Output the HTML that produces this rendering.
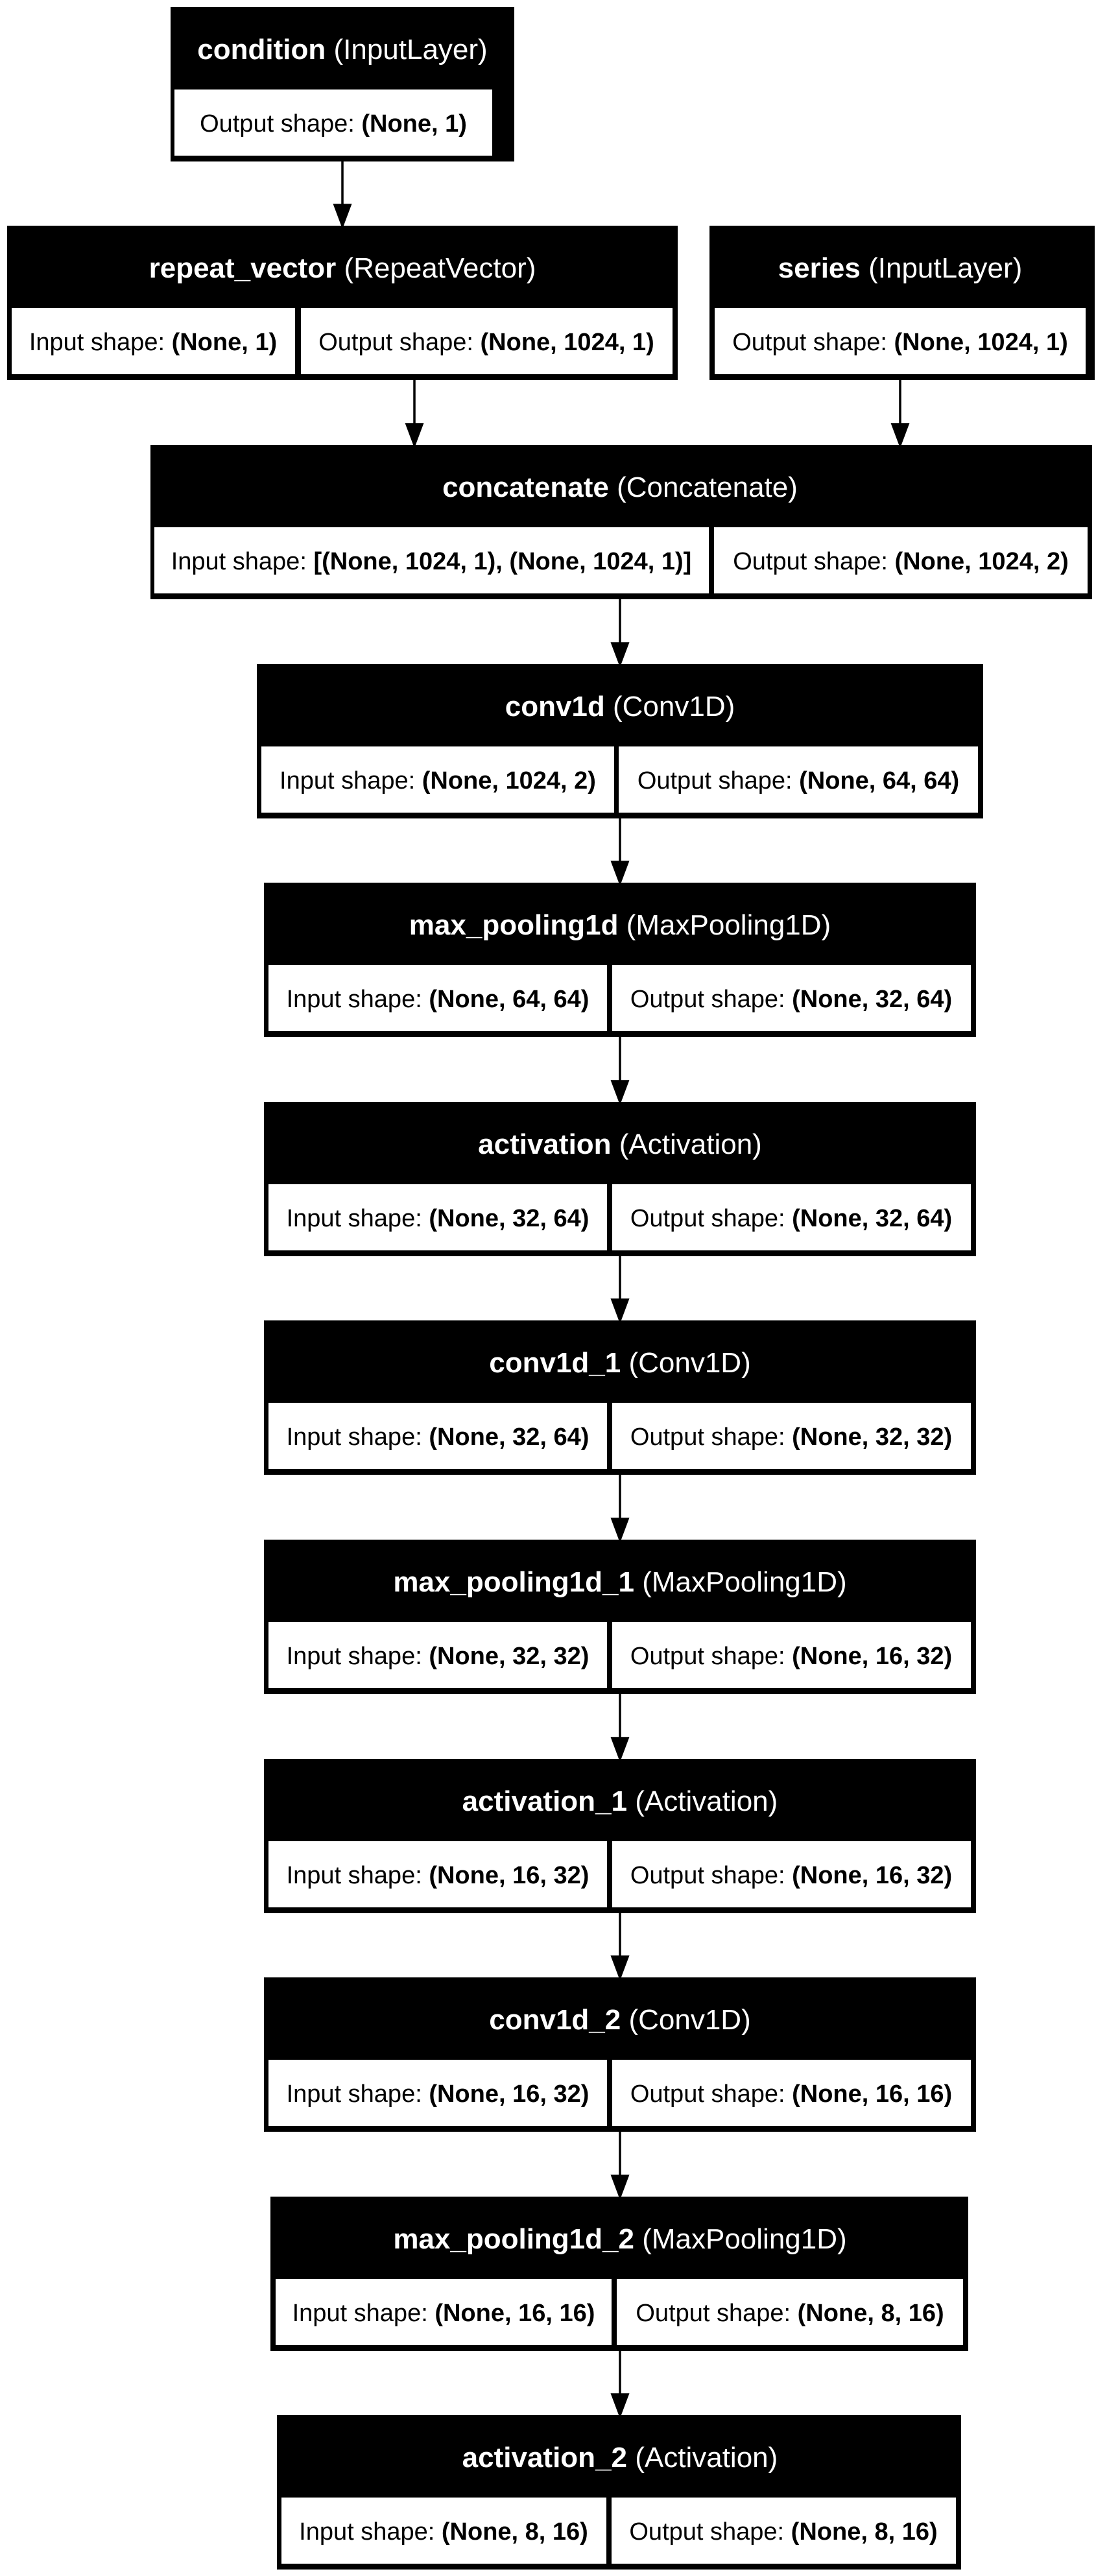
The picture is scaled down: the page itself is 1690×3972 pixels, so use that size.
<!DOCTYPE html>
<html><head><meta charset="utf-8"><style>
html,body{margin:0;padding:0;background:#fff;}
svg{display:block;}
text{font-family:"Liberation Sans",Arial,sans-serif;font-size:38px;text-anchor:middle;}
.t{fill:#fff;font-size:44px;}
.c{fill:#000;}
.b{font-weight:bold;}
</style></head><body>
<svg width="1690" height="3972" viewBox="0 0 1690 3972" xmlns="http://www.w3.org/2000/svg">
<rect width="1690" height="3972" fill="#fff"/>
<g stroke="#000" stroke-width="3.5" fill="#000">
<line x1="528" y1="248" x2="528" y2="318"/><polygon points="516,316 540,316 528,348"/>
<line x1="639" y1="586" x2="639" y2="656"/><polygon points="627,654 651,654 639,686"/>
<line x1="1388" y1="586" x2="1388" y2="656"/><polygon points="1376,654 1400,654 1388,686"/>
<line x1="956" y1="924" x2="956" y2="994"/><polygon points="944,992 968,992 956,1024"/>
<line x1="956" y1="1262" x2="956" y2="1331"/><polygon points="944,1329 968,1329 956,1361"/>
<line x1="956" y1="1599" x2="956" y2="1669"/><polygon points="944,1667 968,1667 956,1699"/>
<line x1="956" y1="1937" x2="956" y2="2006"/><polygon points="944,2004 968,2004 956,2036"/>
<line x1="956" y1="2274" x2="956" y2="2344"/><polygon points="944,2342 968,2342 956,2374"/>
<line x1="956" y1="2612" x2="956" y2="2682"/><polygon points="944,2680 968,2680 956,2712"/>
<line x1="956" y1="2950" x2="956" y2="3019"/><polygon points="944,3017 968,3017 956,3049"/>
<line x1="956" y1="3287" x2="956" y2="3357"/><polygon points="944,3355 968,3355 956,3387"/>
<line x1="956" y1="3625" x2="956" y2="3694"/><polygon points="944,3692 968,3692 956,3724"/>
</g>

<rect x="263" y="11" width="530" height="238" fill="#000"/>
<rect x="269" y="138" width="490" height="102" fill="#fff"/>
<text class="t" x="528" y="91"><tspan class="b">condition</tspan> (InputLayer)</text>
<text class="c" x="514" y="203">Output shape: <tspan class="b">(None, 1)</tspan></text>

<rect x="11" y="348" width="1034" height="238" fill="#000"/>
<rect x="18" y="475" width="437" height="102" fill="#fff"/>
<rect x="464" y="475" width="573" height="102" fill="#fff"/>
<text class="t" x="528" y="428"><tspan class="b">repeat_vector</tspan> (RepeatVector)</text>
<text class="c" x="236" y="540">Input shape: <tspan class="b">(None, 1)</tspan></text>
<text class="c" x="750" y="540">Output shape: <tspan class="b">(None, 1024, 1)</tspan></text>

<rect x="1094" y="348" width="594" height="238" fill="#000"/>
<rect x="1102" y="475" width="572" height="102" fill="#fff"/>
<text class="t" x="1388" y="428"><tspan class="b">series</tspan> (InputLayer)</text>
<text class="c" x="1388" y="540">Output shape: <tspan class="b">(None, 1024, 1)</tspan></text>

<rect x="232" y="686" width="1452" height="238" fill="#000"/>
<rect x="238" y="813" width="855" height="102" fill="#fff"/>
<rect x="1101" y="813" width="576" height="102" fill="#fff"/>
<text class="t" x="956" y="766"><tspan class="b">concatenate</tspan> (Concatenate)</text>
<text class="c" x="665" y="878">Input shape: <tspan class="b">[(None, 1024, 1), (None, 1024, 1)]</tspan></text>
<text class="c" x="1389" y="878">Output shape: <tspan class="b">(None, 1024, 2)</tspan></text>

<rect x="396" y="1024" width="1120" height="238" fill="#000"/>
<rect x="403" y="1151" width="544" height="102" fill="#fff"/>
<rect x="954" y="1151" width="554" height="102" fill="#fff"/>
<text class="t" x="956" y="1104"><tspan class="b">conv1d</tspan> (Conv1D)</text>
<text class="c" x="675" y="1216">Input shape: <tspan class="b">(None, 1024, 2)</tspan></text>
<text class="c" x="1231" y="1216">Output shape: <tspan class="b">(None, 64, 64)</tspan></text>

<rect x="407" y="1361" width="1098" height="238" fill="#000"/>
<rect x="414" y="1488" width="522" height="102" fill="#fff"/>
<rect x="944" y="1488" width="553" height="102" fill="#fff"/>
<text class="t" x="956" y="1441"><tspan class="b">max_pooling1d</tspan> (MaxPooling1D)</text>
<text class="c" x="675" y="1553">Input shape: <tspan class="b">(None, 64, 64)</tspan></text>
<text class="c" x="1220" y="1553">Output shape: <tspan class="b">(None, 32, 64)</tspan></text>

<rect x="407" y="1699" width="1098" height="238" fill="#000"/>
<rect x="414" y="1826" width="522" height="102" fill="#fff"/>
<rect x="944" y="1826" width="553" height="102" fill="#fff"/>
<text class="t" x="956" y="1779"><tspan class="b">activation</tspan> (Activation)</text>
<text class="c" x="675" y="1891">Input shape: <tspan class="b">(None, 32, 64)</tspan></text>
<text class="c" x="1220" y="1891">Output shape: <tspan class="b">(None, 32, 64)</tspan></text>

<rect x="407" y="2036" width="1098" height="238" fill="#000"/>
<rect x="414" y="2163" width="522" height="102" fill="#fff"/>
<rect x="944" y="2163" width="553" height="102" fill="#fff"/>
<text class="t" x="956" y="2116"><tspan class="b">conv1d_1</tspan> (Conv1D)</text>
<text class="c" x="675" y="2228">Input shape: <tspan class="b">(None, 32, 64)</tspan></text>
<text class="c" x="1220" y="2228">Output shape: <tspan class="b">(None, 32, 32)</tspan></text>

<rect x="407" y="2374" width="1098" height="238" fill="#000"/>
<rect x="414" y="2501" width="522" height="102" fill="#fff"/>
<rect x="944" y="2501" width="553" height="102" fill="#fff"/>
<text class="t" x="956" y="2454"><tspan class="b">max_pooling1d_1</tspan> (MaxPooling1D)</text>
<text class="c" x="675" y="2566">Input shape: <tspan class="b">(None, 32, 32)</tspan></text>
<text class="c" x="1220" y="2566">Output shape: <tspan class="b">(None, 16, 32)</tspan></text>

<rect x="407" y="2712" width="1098" height="238" fill="#000"/>
<rect x="414" y="2839" width="522" height="102" fill="#fff"/>
<rect x="944" y="2839" width="553" height="102" fill="#fff"/>
<text class="t" x="956" y="2792"><tspan class="b">activation_1</tspan> (Activation)</text>
<text class="c" x="675" y="2904">Input shape: <tspan class="b">(None, 16, 32)</tspan></text>
<text class="c" x="1220" y="2904">Output shape: <tspan class="b">(None, 16, 32)</tspan></text>

<rect x="407" y="3049" width="1098" height="238" fill="#000"/>
<rect x="414" y="3176" width="522" height="102" fill="#fff"/>
<rect x="944" y="3176" width="553" height="102" fill="#fff"/>
<text class="t" x="956" y="3129"><tspan class="b">conv1d_2</tspan> (Conv1D)</text>
<text class="c" x="675" y="3241">Input shape: <tspan class="b">(None, 16, 32)</tspan></text>
<text class="c" x="1220" y="3241">Output shape: <tspan class="b">(None, 16, 16)</tspan></text>

<rect x="417" y="3387" width="1076" height="238" fill="#000"/>
<rect x="425" y="3514" width="518" height="102" fill="#fff"/>
<rect x="951" y="3514" width="534" height="102" fill="#fff"/>
<text class="t" x="956" y="3467"><tspan class="b">max_pooling1d_2</tspan> (MaxPooling1D)</text>
<text class="c" x="684" y="3579">Input shape: <tspan class="b">(None, 16, 16)</tspan></text>
<text class="c" x="1218" y="3579">Output shape: <tspan class="b">(None, 8, 16)</tspan></text>

<rect x="427" y="3724" width="1055" height="238" fill="#000"/>
<rect x="434" y="3851" width="501" height="102" fill="#fff"/>
<rect x="943" y="3851" width="531" height="102" fill="#fff"/>
<text class="t" x="956" y="3804"><tspan class="b">activation_2</tspan> (Activation)</text>
<text class="c" x="684" y="3916">Input shape: <tspan class="b">(None, 8, 16)</tspan></text>
<text class="c" x="1208" y="3916">Output shape: <tspan class="b">(None, 8, 16)</tspan></text>
</svg>
</body></html>
